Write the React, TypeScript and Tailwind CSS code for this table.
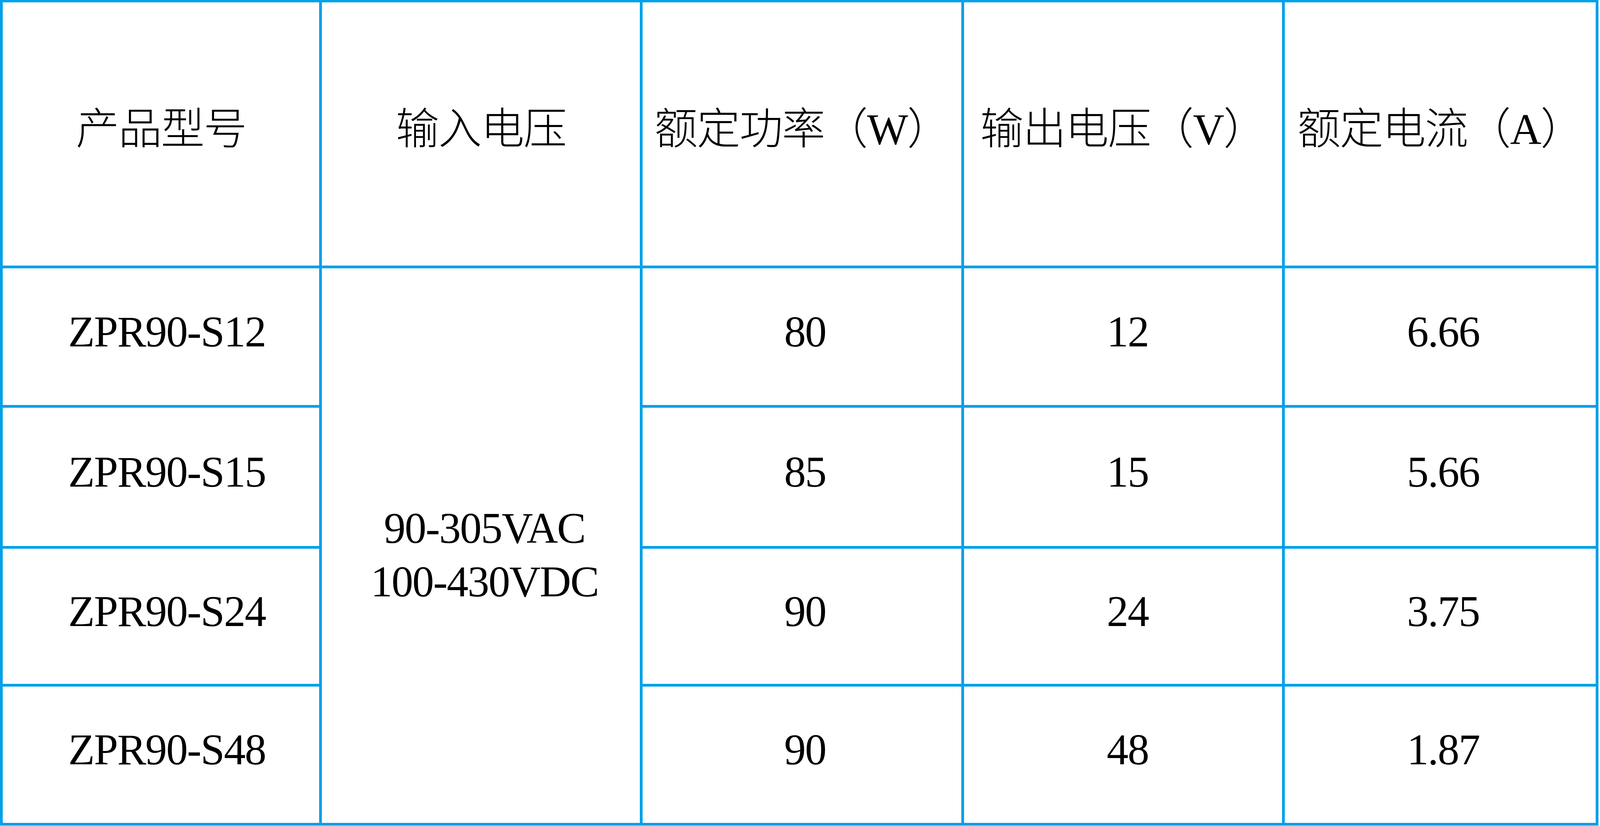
import React from 'react';

const headers = ['产品型号', '输入电压', '额定功率（W）', '输出电压（V）', '额定电流（A）'];

const rows = [
  { model: 'ZPR90-S12', power: '80', vout: '12', current: '6.66' },
  { model: 'ZPR90-S15', power: '85', vout: '15', current: '5.66' },
  { model: 'ZPR90-S24', power: '90', vout: '24', current: '3.75' },
  { model: 'ZPR90-S48', power: '90', vout: '48', current: '1.87' },
];

const Cell: React.FC<{ children: React.ReactNode; className?: string }> = ({ children, className = '' }) => (
  <div
    className={`flex min-w-0 items-center justify-center border-r-[7px] border-b-[7px] border-[#00a0e9] text-center whitespace-nowrap ${className}`}
  >
    {children}
  </div>
);

const App: React.FC = () => {
  return (
    <div className="h-screen w-full overflow-hidden bg-white">
      {/* spec table, sized to the window */}
      <div
        className="grid h-[calc(100%-1px)] w-[99.9%] grid-cols-[1074fr_1078fr_1082fr_1078fr_1055fr] grid-rows-[681fr_357fr_361fr_353fr_356fr] border-l-[7px] border-t-[6px] border-[#00a0e9] text-[2.714vw] leading-[1.23] tracking-[-0.02em] text-black"
        style={{ fontFamily: '"Liberation Serif", "Noto Sans CJK SC", serif' }}
      >
        {headers.map((h) => (
          <Cell key={h} className="pb-[22px] font-light">
            {h}
          </Cell>
        ))}

        {rows.map((row, i) => (
          <React.Fragment key={row.model}>
            <Cell className="pb-[24px] pl-[0.74vw]">{row.model}</Cell>
            {i === 0 && (
              <Cell className="col-start-2 row-start-2 row-span-4 flex-col pt-[50px] pl-[0.45vw]">
                <span>90-305VAC</span>
                <span>100-430VDC</span>
              </Cell>
            )}
            <Cell className="pb-[24px] pl-[0.37vw]">{row.power}</Cell>
            <Cell className="pb-[24px] pl-[0.56vw]">{row.vout}</Cell>
            <Cell className="pb-[24px] pl-[0.37vw]">{row.current}</Cell>
          </React.Fragment>
        ))}
      </div>
    </div>
  );
};

export default App;
